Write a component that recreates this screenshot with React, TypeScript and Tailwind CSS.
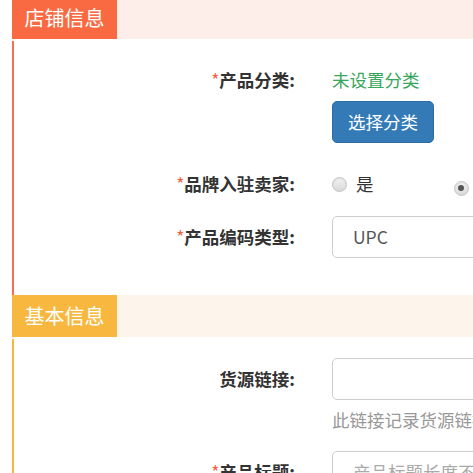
import React from "react";

const font = { fontFamily: '"Microsoft YaHei", "Noto Sans CJK SC", "Noto Sans", sans-serif' };

function Label({ text, required }: { text: string; required?: boolean }) {
  return (
    <div className="w-[281px] shrink-0 text-right text-[17.5px] leading-[26px] font-bold text-[#333]">
      {required && <span className="text-[#f0603c] font-normal">*</span>}
      {text}
    </div>
  );
}

function Radio({ checked }: { checked?: boolean }) {
  return (
    <span className="relative inline-flex h-[15px] w-[15px] items-center justify-center rounded-full border border-[#c4c4c4] bg-gradient-to-b from-[#f2f2f2] to-[#d9d9d9] shadow-[inset_0_1px_1px_rgba(0,0,0,0.08)]">
      {checked && <span className="h-[6px] w-[6px] rounded-full bg-[#555]" />}
    </span>
  );
}

export default function App() {
  return (
    <div className="w-[473px] h-[473px] overflow-hidden bg-white" style={font}>
      <div className="w-[700px] pl-[12px]">
        {/* Section 1 header */}
        <div className="-mt-[3px] flex h-[42px] bg-[#fdeeea]">
          <div className="flex w-[105px] items-center justify-center bg-[#f96a42] text-[20px] text-white">
            店铺信息
          </div>
        </div>
        {/* Section 1 body */}
        <div className="mt-[2px] border-l-[2px] border-[#f47050] pt-[26px] pb-[37px]">
          <div className="flex">
            <Label text="产品分类:" required />
            <div className="ml-[37px] flex flex-col items-start">
              <div className="text-[17.5px] leading-[26px] text-[#36a65a]">未设置分类</div>
              <button className="mt-[8px] h-[42px] w-[102px] rounded-[5px] border border-[#2e6da4] bg-[#337ab7] text-[17.5px] text-white">
                选择分类
              </button>
            </div>
          </div>
          <div className="mt-[28px] flex items-center">
            <Label text="品牌入驻卖家:" required />
            <div className="ml-[37px] flex items-center text-[17.5px] leading-[26px] text-[#333]">
              <Radio />
              <span className="ml-[9px]">是</span>
              <span className="ml-[80px]">
                <Radio checked />
              </span>
              <span className="ml-[9px]">否</span>
            </div>
          </div>
          <div className="mt-[19px] flex items-center">
            <Label text="产品编码类型:" required />
            <div className="ml-[37px] flex h-[42px] w-[300px] items-center rounded-[5px] border border-[#ccc] pl-[20px] text-[17.5px] text-[#555]">
              UPC
            </div>
          </div>
        </div>
        {/* Section 2 header */}
        <div className="flex h-[42px] bg-[#fdf5ec]">
          <div className="flex w-[105px] items-center justify-center bg-[#f8b840] text-[20px] text-white">
            基本信息
          </div>
        </div>
        {/* Section 2 body */}
        <div className="mt-[2px] border-l-[2px] border-[#f8b840] pt-[19px]">
          <div className="flex items-center">
            <Label text="货源链接:" />
            <div className="ml-[37px] h-[42px] w-[300px] rounded-[5px] border border-[#ccc]" />
          </div>
          <div className="flex">
            <div className="w-[281px] shrink-0" />
            <div className="ml-[37px] mt-[7px] text-[17.5px] leading-[26px] text-[#999]">
              此链接记录货源链接地址，方便以后查找
            </div>
          </div>
          <div className="mt-[18px] flex items-center">
            <Label text="产品标题:" required />
            <div className="ml-[37px] flex h-[42px] w-[300px] items-center rounded-[5px] border border-[#ccc] pl-[20px] text-[17.5px] text-[#aaa]">
              产品标题长度不能超过
            </div>
          </div>
        </div>
      </div>
    </div>
  );
}
